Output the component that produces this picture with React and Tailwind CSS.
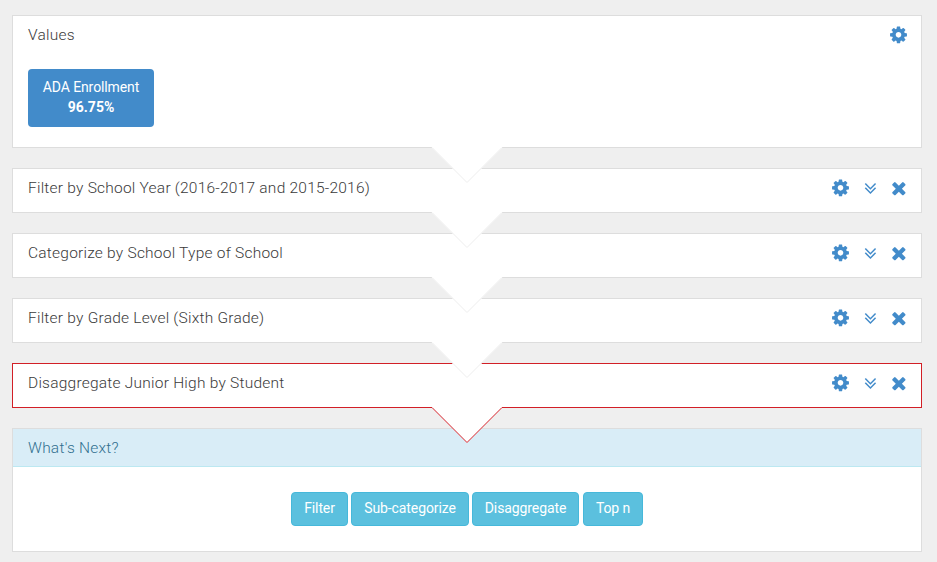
import React from 'react';

const COG =
  'M1024 896q0-106-75-181t-181-75-181 75-75 181 75 181 181 75 181-75 75-181zm512-109v222q0 12-8 23t-20 13l-185 28q-19 54-39 91 35 50 107 138 10 12 10 25t-9 23q-27 37-99 108t-94 71q-12 0-26-9l-138-108q-44 23-91 38-16 136-29 186-7 28-36 28h-222q-14 0-24.500-8.500t-11.500-21.500l-28-184q-49-16-90-37l-141 107q-10 9-25 9-14 0-25-11-126-114-165-168-7-10-7-23 0-12 8-23 15-21 51-66.500t54-70.500q-27-50-41-99l-183-27q-13-2-21-12.500t-8-23.500v-222q0-12 8-23t19-13l186-28q14-46 39-92-40-57-107-138-10-12-10-24 0-10 9-23 26-36 98.500-107.500t94.500-71.500q13 0 26 10l138 107q44-23 91-38 16-136 29-186 7-28 36-28h222q14 0 24.500 8.500t11.500 21.500l28 184q49 16 90 37l142-107q9-9 24-9 13 0 25 10 129 119 165 170 7 8 7 22 0 12-8 23-15 21-51 66.500t-54 70.500q26 50 41 98l183 28q13 2 21 12.500t8 23.500z';
const DOWN =
  'M1075 928q0 13-10 23l-466 466q-10 10-23 10t-23-10l-466-466q-10-10-10-23t10-23l50-50q10-10 23-10t23 10l393 393 393-393q10-10 23-10t23 10l50 50q10 10 10 23zm0-384q0 13-10 23l-466 466q-10 10-23 10t-23-10l-466-466q-10-10-10-23t10-23l50-50q10-10 23-10t23 10l393 393 393-393q10-10 23-10t23 10l50 50q10 10 10 23z';
const TIMES =
  'M1298 1322q0 40-28 68l-136 136q-28 28-68 28t-68-28l-294-294-294 294q-28 28-68 28t-68-28l-136-136q-28-28-28-68t28-68l294-294-294-294q-28-28-28-68t28-68l136-136q28-28 68-28t68 28l294 294 294-294q28-28 68-28t68 28l136 136q28 28 28 68t-28 68l-294 294 294 294q28 28 28 68z';

function Glyph({ path, units }) {
  return (
    <svg
      className="h-5 shrink-0 fill-[#428bca]"
      style={{ width: (units * 20) / 1792 }}
      viewBox={`0 0 ${units} 1792`}
      aria-hidden="true"
    >
      <path d={path} />
    </svg>
  );
}

function CogGlyph() {
  return (
    <svg
      className="h-[19.700px] w-[17px] shrink-0 fill-[#428bca]"
      viewBox="0 0 1536 1792"
      aria-hidden="true"
    >
      <path d={COG} />
    </svg>
  );
}

function Arrow({ active }) {
  return (
    <svg
      className="absolute top-full left-[418px] z-10 h-[37px] w-[72px]"
      viewBox="0 0 72 37"
      aria-hidden="true"
    >
      <path d="M1 0H71V1L36 36L1 1Z" fill="#fff" />
      <path
        d="M1 0.500L36 35.500L71 0.500"
        fill="none"
        stroke={active ? '#d21f26' : '#ededed'}
      />
    </svg>
  );
}

function Step({ title, active, children }) {
  return (
    <section
      className={`relative border bg-white pr-[14px] pl-[15px] ${
        active ? 'border-[#d21f26]' : 'border-[#dddddd]'
      } ${children ? 'h-[133px]' : 'h-[45px]'}`}
    >
      <div className="flex items-start justify-between pt-[9px]">
        <h2 className="text-[15.500px] leading-5 font-light tracking-[0.230px] text-[#3a3a3a]">
          {title}
        </h2>
        <div className="flex gap-[14.600px]">
          <CogGlyph />
          {!children && <Glyph path={DOWN} units={1152} />}
          {!children && <Glyph path={TIMES} units={1408} />}
        </div>
      </div>
      {children}
      <div className="absolute inset-x-0 bottom-0 h-0">
        <Arrow active={active} />
      </div>
    </section>
  );
}

function ActionButton({ className, children }) {
  return (
    <button
      className={`h-[34px] rounded-[4px] border border-[#46b8da] bg-[#5bc0de] pb-0.5 text-center text-sm leading-5 tracking-[-0.100px] text-white ${className}`}
    >
      {children}
    </button>
  );
}

export default function App() {
  return (
    <main className="flex h-[562px] w-[937px] flex-col gap-5 overflow-hidden bg-[#efefef] pt-[15px] pr-[15px] pl-3 font-['Roboto',sans-serif]">
      <Step title="Values">
        <div className="mt-6 h-[58px] w-[126px] rounded-[4px] bg-[#428bca] pt-2 text-center text-sm leading-5 text-white">
          <div className="tracking-[-0.100px]">ADA Enrollment</div>
          <div className="font-bold">96.75%</div>
        </div>
      </Step>
      <Step title="Filter by School Year (2016-2017 and 2015-2016)" />
      <Step title="Categorize by School Type of School" />
      <Step title="Filter by Grade Level (Sixth Grade)" />
      <Step title="Disaggregate Junior High by Student" active />
      <section className="h-[124px] border border-[#dddddd] bg-white">
        <h2 className="h-[38px] border-b border-[#bce8f1] bg-[#d9edf7] px-[15px] pt-[9px] text-[15.500px] leading-5 font-light tracking-[0.230px] text-[#31708f]">
          What's Next?
        </h2>
        <div className="flex justify-center pt-[25px]">
          <ActionButton className="mr-[3px] w-[57px]">Filter</ActionButton>
          <ActionButton className="mr-[3px] w-[118px]">Sub-categorize</ActionButton>
          <ActionButton className="mr-1 w-[107px]">Disaggregate</ActionButton>
          <ActionButton className="w-[60px]">Top n</ActionButton>
        </div>
      </section>
    </main>
  );
}
